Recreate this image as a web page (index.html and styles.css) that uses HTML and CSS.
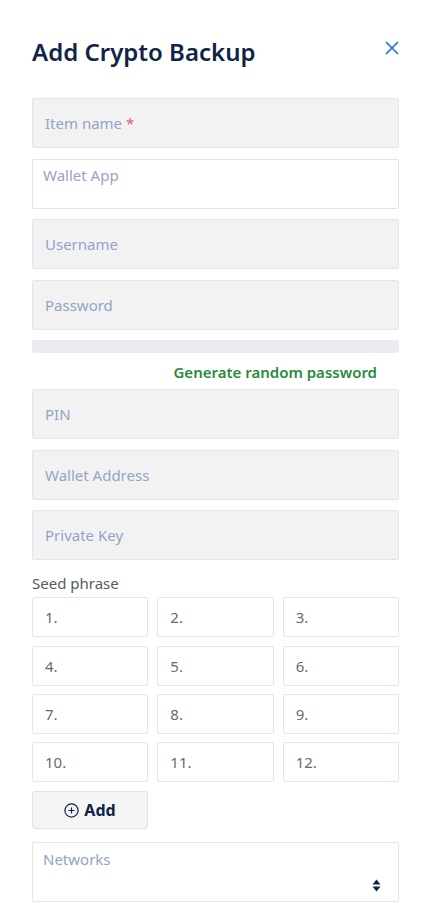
FILE: index.html
```html
<!DOCTYPE html>
<html>
<head>
<meta charset="utf-8">
<link rel="stylesheet" href="styles.css">
</head>
<body>
<div class="modal">
  <div class="header">
    <h1 class="title">Add Crypto Backup</h1>
    <button class="close" aria-label="Close">
      <svg width="14" height="14" viewBox="0 0 14 14"><path d="M1 1L13 13M13 1L1 13" stroke="#1f6fd1" stroke-width="1.6" fill="none"/></svg>
    </button>
  </div>
  <div class="fields">
    <div class="field filled"><span class="ph">Item name <span class="req">*</span></span></div>
    <div class="field plain"><span class="ph">Wallet App</span></div>
    <div class="field filled"><span class="ph">Username</span></div>
    <div class="field filled"><span class="ph">Password</span></div>
  </div>
  <div class="strength"></div>
  <div class="generate">Generate random password</div>
  <div class="fields">
    <div class="field filled"><span class="ph">PIN</span></div>
    <div class="field filled"><span class="ph">Wallet Address</span></div>
    <div class="field filled"><span class="ph">Private Key</span></div>
  </div>
  <div class="seed-label">Seed phrase</div>
  <div class="seed-grid">
    <div class="seed">1.</div><div class="seed">2.</div><div class="seed">3.</div>
    <div class="seed">4.</div><div class="seed">5.</div><div class="seed">6.</div>
    <div class="seed">7.</div><div class="seed">8.</div><div class="seed">9.</div>
    <div class="seed">10.</div><div class="seed">11.</div><div class="seed">12.</div>
  </div>
  <button class="add">
    <svg width="15" height="15" viewBox="0 0 15 15"><circle cx="7.5" cy="7.5" r="6.6" stroke="#0f2446" stroke-width="1.2" fill="none"/><path d="M7.5 4.5V10.5M4.5 7.5H10.5" stroke="#0f2446" stroke-width="1.2"/></svg>
    <span>Add</span>
  </button>
  <div class="select">
    <span class="ph">Networks</span>
    <svg class="sort" width="9" height="13" viewBox="0 0 9 13"><path d="M4.5 0.5L8.5 5.5H0.5Z M4.5 12.5L0.5 7.5H8.5Z" fill="#0f2446"/></svg>
  </div>
</div>
</body>
</html>
```
FILE: styles.css
```css
* { box-sizing: border-box; }
body {
  margin: 0;
  background: #fff;
  font-family: "Noto Sans", "Open Sans", sans-serif;
}
.modal {
  padding: 32px 30px 0 32px;
  width: 429px;
}
.header {
  display: flex;
  justify-content: space-between;
  align-items: flex-start;
  height: 66px;
}
.title {
  margin: 2px 0 0 0;
  font-size: 24px;
  font-weight: 600;
  color: #0f2446;
  line-height: 36px;
}
.close {
  border: 0;
  background: none;
  padding: 0;
  margin: 9px 0 0 0;
  width: 14px;
  height: 14px;
  display: block;
}
.close svg { display: block; }
.fields {
  display: flex;
  flex-direction: column;
  gap: 10.67px;
}
.field {
  height: 50px;
  border: 1px solid #e3e4ef;
  border-radius: 2px;
  display: flex;
  align-items: center;
  padding: 0 12px;
}
.filled { background: #f2f2f3; }
.plain {
  background: #fff;
  align-items: flex-start;
  padding: 5px 10px;
}
.ph {
  color: #95a3c6;
  font-size: 15px;
}
.req { color: #f0566a; }
.strength {
  margin-top: 10px;
  height: 13px;
  background: #ebecf0;
  border-radius: 2px;
}
.generate {
  text-align: right;
  padding-right: 22px;
  color: #2b8a3e;
  font-size: 15px;
  font-weight: 600;
  line-height: 20px;
  margin-top: 9px;
  margin-bottom: 7px;
}
.seed-label {
  margin-top: 12px;
  color: #555b61;
  font-size: 15px;
  line-height: 22px;
}
.seed-grid {
  margin-top: 3px;
  display: grid;
  grid-template-columns: 1fr 1fr 1fr;
  column-gap: 9px;
  row-gap: 8.3px;
}
.seed {
  height: 40px;
  border: 1px solid #e3e4ef;
  border-radius: 2px;
  display: flex;
  align-items: center;
  padding: 0 12px;
  color: #666b71;
  font-size: 15px;
}
.add {
  margin-top: 9px;
  width: 116px;
  height: 38px;
  background: #f4f6f6;
  border: 1px solid #e0e3e6;
  border-radius: 3px;
  display: flex;
  align-items: center;
  justify-content: center;
  gap: 5px;
  font-family: inherit;
  font-size: 16px;
  font-weight: 700;
  color: #0f2446;
  padding: 0;
}
.add svg { display: block; }
.select {
  position: relative;
  margin-top: 13px;
  height: 60px;
  border: 1px solid #e3e4ef;
  border-radius: 2px;
  padding: 5px 10px;
}
.sort {
  position: absolute;
  right: 17px;
  bottom: 9px;
}
```
